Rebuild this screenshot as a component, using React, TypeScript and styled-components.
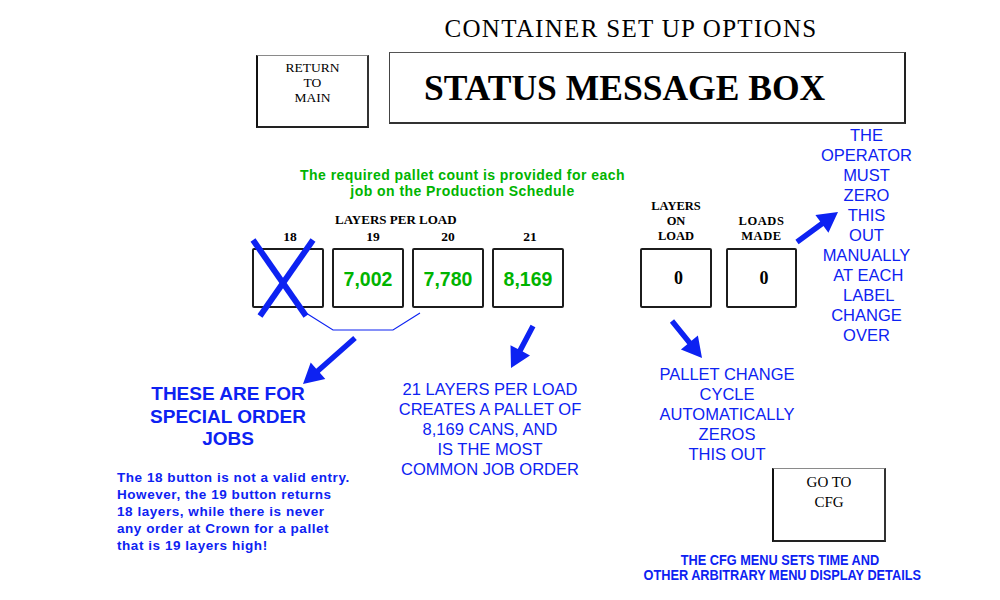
import React from "react";
import styled, { createGlobalStyle } from "styled-components";

const GlobalStyle = createGlobalStyle`
  html, body { margin: 0; padding: 0; background: #fff; }
  body { width: 1000px; height: 600px; overflow: hidden; }
  * { box-sizing: border-box; }
`;

const BLUE = "#0d22f2";
const GREEN = "#00b400";
const SERIF = `"Liberation Serif", "Times New Roman", serif`;
const SANS = `"Liberation Sans", Arial, sans-serif`;

const Page = styled.div`
  position: relative;
  width: 1000px;
  height: 600px;
  overflow: hidden;
  background: #fff;
  color: #000;
  font-family: ${SERIF};
`;

const Title = styled.h1`
  margin: 0;
  padding: 15px 0 0 262px;
  font-family: ${SERIF};
  font-weight: normal;
  font-size: 25px;
  line-height: 28px;
  letter-spacing: 1.3px;
  text-align: center;
  white-space: nowrap;
`;

const TopRow = styled.div`
  display: flex;
  align-items: flex-start;
  height: 72px;
  margin-top: 9px;
  padding-left: 256px;
`;

const NavButton = styled.div`
  width: ${(p: { $w: number; $h: number }) => p.$w}px;
  height: ${(p) => p.$h}px;
  border-top: 1px solid #8a8a8a;
  border-left: 2px solid #111;
  border-right: 2px solid #333;
  border-bottom: 2px solid #222;
  font-family: ${SERIF};
  text-align: center;
  flex: none;
`;

const ReturnButton = styled(NavButton)`
  margin-top: 3px;
  padding-top: 4px;
  font-size: 13.5px;
  line-height: 15px;
`;

const StatusBox = styled.div`
  margin-left: 20px;
  width: 517px;
  height: 72px;
  flex: none;
  border-top: 1px solid #555;
  border-left: 1px solid #444;
  border-right: 2px solid #222;
  border-bottom: 2px solid #333;
  padding: 15px 0 0 34px;
  font-family: ${SERIF};
  font-weight: bold;
  font-size: 35.5px;
  line-height: 40px;
  white-space: nowrap;
`;

const Middle = styled.div`
  display: flex;
  align-items: flex-start;
`;

const LayersArea = styled.div`
  margin-left: 252px;
  margin-top: 43px;
  width: 312px;
  flex: none;
`;

const GreenNote = styled.div`
  margin-left: 48px;
  width: 325px;
  text-align: center;
  font-family: ${SANS};
  font-weight: bold;
  font-size: 14px;
  line-height: 16px;
  letter-spacing: 0.45px;
  color: ${GREEN};
  white-space: nowrap;
`;

const LayersTitle = styled.div`
  margin-top: 13px;
  padding-left: 83px;
  font-family: ${SERIF};
  font-weight: bold;
  font-size: 13px;
  line-height: 15px;
  white-space: nowrap;
`;

const LayerRow = styled.div`
  display: grid;
  grid-template-columns: repeat(4, 72px);
  column-gap: 8px;
  margin-top: 2px;
`;

const LayerCol = styled.div`
  display: flex;
  flex-direction: column;
`;

const LayerLabel = styled.div<{ $shift: number }>`
  font-family: ${SERIF};
  font-weight: bold;
  font-size: 13.5px;
  line-height: 15px;
  text-align: center;
  padding-left: ${(p) => (p.$shift > 0 ? p.$shift * 2 : 0)}px;
`;

const ValueBox = styled.div`
  margin-top: 4px;
  height: 60px;
  border: 2px solid #1c1c1c;
  border-radius: 2px;
  display: flex;
  align-items: center;
  justify-content: center;
`;

const LayerBox = styled(ValueBox)`
  padding-top: 3px;
  font-family: ${SANS};
  font-weight: bold;
  font-size: 19.5px;
  color: ${GREEN};
`;

const StatsArea = styled.div`
  margin-left: 76px;
  margin-top: 75px;
  display: grid;
  grid-template-columns: 72px 71px;
  column-gap: 14px;
  flex: none;
`;

const StatCol = styled.div`
  display: flex;
  flex-direction: column;
  justify-content: flex-end;
`;

const StatLabel = styled.div<{ $ls: number }>`
  font-family: ${SERIF};
  font-weight: bold;
  font-size: 12.5px;
  line-height: 15px;
  text-align: center;
  letter-spacing: ${(p) => p.$ls}px;
`;

const StatBox = styled(ValueBox)`
  padding-left: 5px;
  font-family: ${SERIF};
  font-weight: bold;
  font-size: 18px;
`;

const BlueNote = styled.div`
  font-family: ${SANS};
  font-size: 16.5px;
  line-height: 20px;
  color: ${BLUE};
  text-align: center;
  white-space: pre;
  flex: none;
`;

const OperatorNote = styled(BlueNote)`
  margin-left: 9px;
  margin-top: 1px;
  width: 121px;
`;

const Bottom = styled.div`
  display: flex;
  align-items: flex-start;
`;

const LeftCol = styled.div`
  margin-left: 117px;
  margin-top: 38px;
  width: 240px;
  flex: none;
`;

const SpecialTitle = styled.div`
  width: 222px;
  text-align: center;
  font-family: ${SANS};
  font-weight: bold;
  font-size: 19px;
  line-height: 22.5px;
  color: ${BLUE};
`;

const SmallNote = styled.div`
  margin-top: 18px;
  font-family: ${SANS};
  font-weight: bold;
  font-size: 13.5px;
  line-height: 17.2px;
  letter-spacing: 0.55px;
  color: ${BLUE};
  white-space: pre;
`;

const CommonNote = styled(BlueNote)`
  margin-left: 33px;
  margin-top: 34.4px;
  width: 200px;
`;

const RightCol = styled.div`
  margin-left: 40px;
  margin-top: 19.4px;
  width: 300px;
  flex: none;
`;

const PalletNote = styled(BlueNote)`
  width: 194px;
`;

const CfgButton = styled(NavButton)`
  margin-top: 3.6px;
  margin-left: 142px;
  padding-top: 3px;
  font-size: 15px;
  line-height: 20px;
`;

const CfgNote = styled.div`
  margin-top: 11px;
  width: 300px;
  text-align: center;
  font-family: ${SANS};
  font-weight: bold;
  font-size: 14px;
  line-height: 15px;
  color: ${BLUE};
  white-space: nowrap;
  transform: scaleX(0.91);
  transform-origin: center;
`;

const Overlay = styled.svg`
  position: absolute;
  left: 0;
  top: 0;
  pointer-events: none;
`;

function arrowPoints(
  x1: number,
  y1: number,
  x2: number,
  y2: number,
  shaft = 5.5,
  headLen = 20,
  headHalf = 11
): string {
  const dx = x2 - x1;
  const dy = y2 - y1;
  const L = Math.hypot(dx, dy);
  const ux = dx / L;
  const uy = dy / L;
  const nx = -uy;
  const ny = ux;
  const bx = x2 - ux * headLen;
  const by = y2 - uy * headLen;
  const w = shaft / 2;
  const pts: [number, number][] = [
    [x1 + nx * w, y1 + ny * w],
    [bx + nx * w, by + ny * w],
    [bx + nx * headHalf, by + ny * headHalf],
    [x2, y2],
    [bx - nx * headHalf, by - ny * headHalf],
    [bx - nx * w, by - ny * w],
    [x1 - nx * w, y1 - ny * w],
  ];
  return pts.map((p) => `${p[0].toFixed(1)},${p[1].toFixed(1)}`).join(" ");
}

const arrows: [number, number, number, number][] = [
  [355, 338, 303, 384],
  [533, 326, 511, 368],
  [797, 242, 838, 212],
  [672, 321, 702, 358],
];

const layers = [
  { label: "18", value: "", shift: 2 },
  { label: "19", value: "7,002", shift: 5 },
  { label: "20", value: "7,780", shift: 0 },
  { label: "21", value: "8,169", shift: 2 },
];

export default function App() {
  return (
    <Page>
      <GlobalStyle />
      <Title>CONTAINER SET UP OPTIONS</Title>
      <TopRow>
        <ReturnButton $w={113} $h={73}>
          RETURN
          <br />
          TO
          <br />
          MAIN
        </ReturnButton>
        <StatusBox>STATUS MESSAGE BOX</StatusBox>
      </TopRow>

      <Middle>
        <LayersArea>
          <GreenNote>
            The required pallet count is provided for each
            <br />
            job on the Production Schedule
          </GreenNote>
          <LayersTitle>LAYERS PER LOAD</LayersTitle>
          <LayerRow>
            {layers.map((l) => (
              <LayerCol key={l.label}>
                <LayerLabel $shift={l.shift}>{l.label}</LayerLabel>
                <LayerBox>{l.value}</LayerBox>
              </LayerCol>
            ))}
          </LayerRow>
        </LayersArea>

        <StatsArea>
          <StatCol>
            <StatLabel $ls={0}>
              LAYERS
              <br />
              ON
              <br />
              LOAD
            </StatLabel>
            <StatBox>0</StatBox>
          </StatCol>
          <StatCol>
            <StatLabel $ls={0.6}>
              LOADS
              <br />
              MADE
            </StatLabel>
            <StatBox>0</StatBox>
          </StatCol>
        </StatsArea>

        <OperatorNote>
          {"THE\nOPERATOR\nMUST\nZERO\nTHIS\nOUT\nMANUALLY\n AT EACH\n LABEL\nCHANGE\nOVER"}
        </OperatorNote>
      </Middle>

      <Bottom>
        <LeftCol>
          <SpecialTitle>
            THESE ARE FOR
            <br />
            SPECIAL ORDER
            <br />
            JOBS
          </SpecialTitle>
          <SmallNote>
            {"The 18 button is not a valid entry.\nHowever, the 19 button returns\n18 layers, while there is never\nany order at Crown for a pallet\nthat is 19 layers high!"}
          </SmallNote>
        </LeftCol>
        <CommonNote>
          {"21 LAYERS PER LOAD\nCREATES A PALLET OF\n8,169 CANS, AND\nIS THE MOST\nCOMMON JOB ORDER"}
        </CommonNote>
        <RightCol>
          <PalletNote>
            {"PALLET CHANGE\nCYCLE\nAUTOMATICALLY\nZEROS\nTHIS OUT"}
          </PalletNote>
          <CfgButton $w={114} $h={74}>
            GO TO
            <br />
            CFG
          </CfgButton>
          <CfgNote>
            THE CFG MENU SETS TIME AND
            <br />
            OTHER ARBITRARY MENU DISPLAY DETAILS
          </CfgNote>
        </RightCol>
      </Bottom>

      <Overlay width={1000} height={600} viewBox="0 0 1000 600">
        <g stroke={BLUE} strokeWidth={6} strokeLinecap="butt">
          <line x1={253} y1={240} x2={306} y2={316} />
          <line x1={313} y1={240} x2={260} y2={316} />
        </g>
        <polyline
          points="306,313 333,330 393,330 420,313"
          fill="none"
          stroke={BLUE}
          strokeWidth={1.2}
        />
        {arrows.map((a, i) => (
          <polygon key={i} points={arrowPoints(a[0], a[1], a[2], a[3])} fill={BLUE} />
        ))}
      </Overlay>
    </Page>
  );
}
